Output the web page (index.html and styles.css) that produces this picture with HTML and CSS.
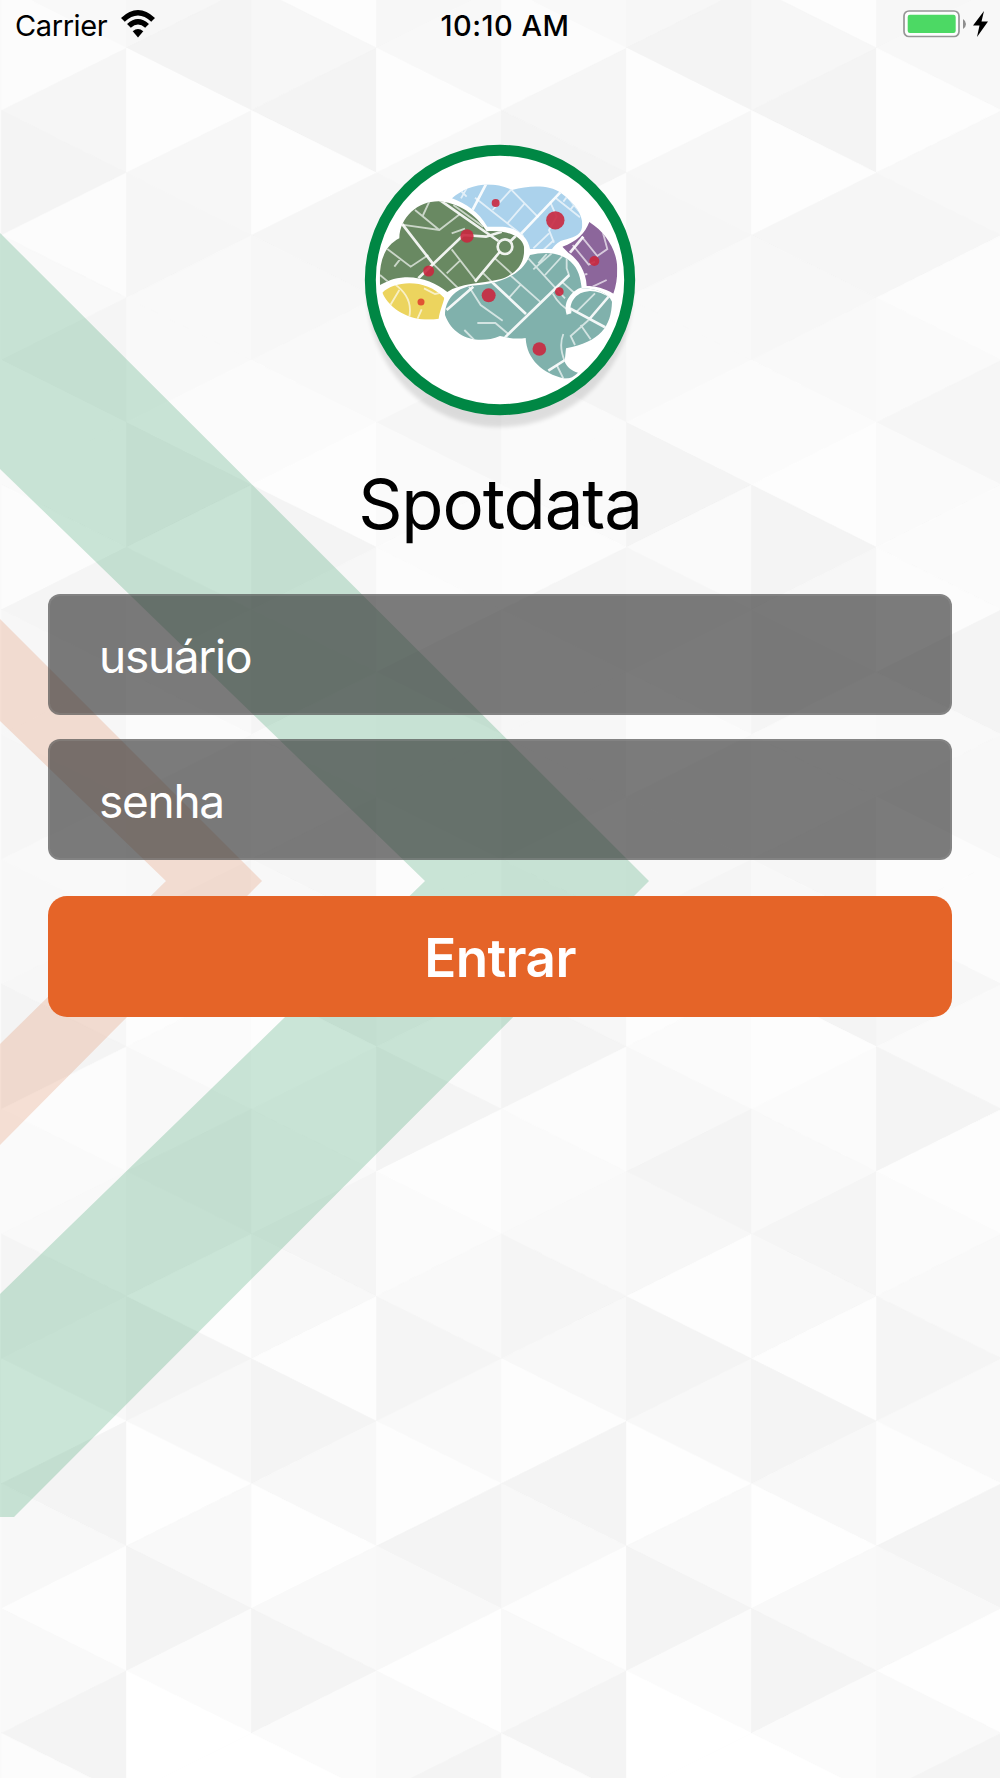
FILE: index.html
```html
<!DOCTYPE html>
<html lang="pt-BR">
<head>
<meta charset="utf-8">
<title>Spotdata</title>
<link rel="stylesheet" href="styles.css">
</head>
<body>
<svg class="backdrop" viewBox="0 0 1000 1778" aria-hidden="true">
  <g id="triangles"></g>
  <path class="chevron-green" d="M0 233 649 881 14 1517H0V1294L425 881 0 469Z"/>
  <path class="chevron-orange" d="M0 619 262 881 0 1145V1044L166 881 0 721Z"/>
</svg>

<div class="screen">
  <header class="status">
    <div class="status-left">
      <span class="carrier">Carrier</span>
      <svg class="wifi" viewBox="0 0 90 74" aria-hidden="true">
        <path d="M0 21Q45-21 90 21L80 31Q45-2 10 31Z"/>
        <path d="M16 37Q45 10 74 37L64 47Q45 30 26 47Z"/>
        <path d="M31 56Q45 44 59 56L45 73Z"/>
      </svg>
    </div>
    <time class="clock">10:10 AM</time>
    <div class="status-right">
      <svg class="battery" viewBox="0 0 84 28" aria-hidden="true">
        <rect x="1" y="1" width="55" height="25.500" rx="5" fill="#fff" fill-opacity=".7" stroke="#969696" stroke-width="1.700"/>
        <rect x="4.700" y="4.700" width="48" height="18.300" rx="2.200" fill="#4cd964"/>
        <path d="M60 9q3 2 3 5t-3 5Z" fill="#8e8e8e"/>
        <path d="M81 1 70 15.500h6.500L74 27 85 11.500H78.500Z" fill="#000"/>
      </svg>
    </div>
  </header>

  <main class="login">
    <svg class="logo" viewBox="0 0 900 930" role="img" aria-label="Spotdata">
      <defs>
        <filter id="soft" x="-10%" y="-10%" width="120%" height="120%"><feGaussianBlur stdDeviation="7"/></filter>
        <clipPath id="c-blue"><path d="M306 205C350 165 420 148 486 180C540 165 600 165 632 188C685 225 705 270 694 300C685 322 655 325 632 333C618 340 612 350 606 357L540 357C535 325 505 290 450 290L412 290C385 245 350 222 306 205Z"/></clipPath>
        <clipPath id="c-olive"><path d="M90 465C86 400 100 350 148 325C150 260 205 212 270 214C340 222 385 265 410 304C465 300 515 315 522 350C526 400 500 432 450 448C390 462 330 460 292 486C260 460 215 440 165 442C130 444 110 455 90 465Z"/></clipPath>
        <clipPath id="c-yellow"><path d="M97 488C135 450 230 445 283 504C278 525 270 540 266 566C200 578 125 550 97 488Z"/></clipPath>
        <clipPath id="c-purple"><path d="M637 350C680 335 705 310 718 276C770 310 800 360 802 415C802 445 798 470 790 491C765 475 735 468 710 468C708 420 680 385 655 368Z"/></clipPath>
        <clipPath id="c-teal"><path d="M285 555C285 510 315 475 365 467C440 463 515 440 540 375C590 362 635 370 662 395C685 415 692 445 695 475C740 475 775 490 786 515C784 590 750 635 648 655L644 695C650 710 665 722 684 728C670 742 655 748 640 745C580 730 530 690 527 624C500 628 475 624 450 618C385 645 310 625 285 555Z"/></clipPath>
      </defs>
      <circle cx="450" cy="493" r="398" fill="#000" opacity=".11" filter="url(#soft)"/>
      <circle cx="450" cy="450" r="389" fill="#fff" stroke="#008744" stroke-width="33"/>
      <g clip-path="url(#c-blue)" class="roads">
        <rect x="290" y="140" width="420" height="230" fill="#abd2ec"/>
        <path class="avenue" d="M412 155 365 245M636 182 500 325"/>
        <path d="M330 180 350 200M350 175 333 205M375 203 520 318M484 178 428 240M480 175 565 262M524 220 472 280M600 215 620 260 597 300 612 338M640 185 700 260M618 205 690 262M655 195 640 215M680 215 662 238M597 310 550 355M612 330 580 360"/>
      </g>
      <g clip-path="url(#c-olive)" class="roads">
        <rect x="80" y="200" width="460" height="300" fill="#698962"/>
        <path class="avenue" d="M262 205 445 333M155 280 248 400M205 445 340 315 408 320 455 305M449 366 375 455M482 333 530 285"/>
        <path d="M155 284 268 300 330 252M195 240 268 300M238 215 218 258M305 310 345 296M112 357 182 410 235 375M150 388 133 410M248 400 325 475M305 358 380 455M330 392 290 430M435 385 495 440M400 430 430 460M90 435 120 460M310 225 400 290"/>
        <circle class="avenue" cx="465" cy="350" r="22"/>
      </g>
      <g clip-path="url(#c-yellow)" class="roads">
        <rect x="90" y="440" width="200" height="140" fill="#ecd45e"/>
        <path d="M130 460Q190 500 178 560M148 480 118 530M222 475 255 492 275 488M215 538 200 572"/>
      </g>
      <g clip-path="url(#c-purple)" class="roads">
        <rect x="630" y="270" width="180" height="230" fill="#8c669b"/>
        <path d="M695 320 742 378 772 357 758 305M668 345 716 404 735 395M728 470 770 450M690 436 712 432"/>
        <path class="avenue" d="M700 320 660 368"/>
      </g>
      <g clip-path="url(#c-teal)" class="roads">
        <rect x="270" y="350" width="530" height="410" fill="#80b1ac"/>
        <path class="avenue" d="M425 455 528 552M465 622 658 435M780 495 716 570M660 535 775 597M595 722 645 690M370 470 290 540"/>
        <path d="M357 470 392 525 458 572M382 579H436L475 612M343 600 375 632M535 385 645 505M605 370 550 418M640 375 585 435M565 400 590 372M512 464 478 502M480 435 570 515M650 370V415L657 435M635 455 680 495M608 490Q630 530 665 545M640 612Q625 650 645 695M716 570 662 618 675 645M692 585 722 628M735 490 680 545M620 705 640 745"/>
        <path class="ring-road" d="M657 552C645 515 675 478 715 476C750 474 775 490 795 505"/>
      </g>
      <g fill="#c9283f" fill-opacity=".9">
        <circle cx="437" cy="219" r="12"/><circle cx="616" cy="271" r="27.500"/><circle cx="351" cy="318" r="20"/>
        <circle cx="236" cy="423" r="16.500"/><circle cx="416" cy="496" r="21"/><circle cx="628" cy="485" r="13"/>
        <circle cx="733" cy="393" r="15"/><circle cx="568" cy="657" r="20.500"/><circle cx="213" cy="516" r="10.500" fill="#e0452f"/>
      </g>
    </svg>
    <h1 class="title">Spotdata</h1>
    <form class="form">
      <input class="field" type="text" placeholder="usuário" aria-label="usuário">
      <input class="field" type="password" placeholder="senha" aria-label="senha">
      <button class="submit" type="button">Entrar</button>
    </form>
  </main>
</div>
<script src="script.js"></script>
</body>
</html>
```
FILE: styles.css
```css
* { box-sizing: border-box; }

body {
  margin: 0;
  background: #fafafa;
  font-family: Inter, "Liberation Sans", sans-serif;
  color: #000;
}

.backdrop {
  position: absolute;
  top: 0;
  left: 0;
  width: 1000px;
  height: 1778px;
}

.chevron-green { fill: rgba(0, 133, 66, 0.2); }
.chevron-orange { fill: rgba(220, 100, 45, 0.19); }

.screen {
  position: relative;
  width: 1000px;
  height: 1778px;
}

.status {
  display: grid;
  grid-template-columns: 1fr auto 1fr;
  align-items: center;
  height: 50px;
  padding: 0 13px 0 15px;
}

.status-left {
  display: flex;
  align-items: center;
  gap: 14px;
}

.status-right {
  display: flex;
  justify-content: flex-end;
}

.carrier {
  font-size: 29px;
  letter-spacing: -0.4px;
}

.wifi {
  width: 34px;
  height: 28px;
  margin-top: -2px;
}

.clock {
  font-size: 29px;
  font-weight: 500;
  letter-spacing: 0.5px;
  padding-left: 8px;
}

.battery {
  width: 84px;
  height: 28px;
  margin-top: -2px;
  overflow: visible;
}

.login {
  display: flex;
  flex-direction: column;
  align-items: center;
  padding: 80px 48px 0;
}

.logo {
  width: 300px;
  height: 310px;
}

.roads {
  fill: none;
  stroke: rgba(255, 255, 255, 0.65);
  stroke-width: 5.5;
}

.avenue {
  stroke: rgba(255, 255, 255, 0.9);
  stroke-width: 8;
}

.ring-road {
  stroke: #fff;
  stroke-width: 15;
}

.title {
  margin: 22px 0 0;
  font-size: 69px;
  line-height: 84px;
  font-weight: 400;
  letter-spacing: -1.1px;
}

.form {
  display: flex;
  flex-direction: column;
  gap: 24px;
  width: 100%;
  margin-top: 48px;
}

.field {
  height: 121px;
  padding: 2px 49px 0;
  border: 2px solid rgba(160, 160, 160, 0.25);
  border-radius: 12px;
  background: rgba(42, 42, 42, 0.615);
  font: 400 46px/54px Inter, "Liberation Sans", sans-serif;
  letter-spacing: -1.3px;
  color: #fff;
}

.field::placeholder {
  color: #fff;
  opacity: 1;
}

.submit {
  height: 121px;
  margin-top: 12px;
  padding-top: 3px;
  border: 0;
  border-radius: 19px;
  background: #e56428;
  font: 600 53px/60px Inter, "Liberation Sans", sans-serif;
  letter-spacing: -0.6px;
  color: #fff;
}
```
FILE: script.js
```js
// Triangle mosaic: four column strips that repeat across the page.
// Each hex digit is the low nibble of a #fXfXfX grey, from top to bottom.
const strips = [
  "9c64c95aac57769874ca958d48d94c",
  "74d7699b4a69b885db847d48e94bff",
  "d74d679bd475a9684db958d48e94bf",
  "78d86ca6abc498cc7a4db959d48e94"
];
const left = 1.5;
const stripWidth = 125;
const top0 = 48;
const step = 62.42;
const group = document.getElementById("triangles");

for (let column = 0; column < 8; column++) {
  const shades = strips[column % 4];
  for (let i = 0; i < shades.length; i++) {
    const level = i - 1;
    const x0 = left + column * stripWidth;
    const x1 = x0 + stripWidth;
    const y = top0 + level * step;
    const apexRight = (level + column) % 2 === 0;
    const apex = apexRight ? x1 : x0;
    const base = apexRight ? x0 : x1;
    const shape = document.createElementNS("http://www.w3.org/2000/svg", "polygon");
    const color = "#" + ("f" + shades[i]).repeat(3);
    shape.setAttribute("points", `${base},${y - step} ${apex},${y} ${base},${y + step}`);
    shape.setAttribute("fill", color);
    shape.setAttribute("stroke", color);
    shape.setAttribute("stroke-width", "0.6");
    group.appendChild(shape);
  }
}
```
